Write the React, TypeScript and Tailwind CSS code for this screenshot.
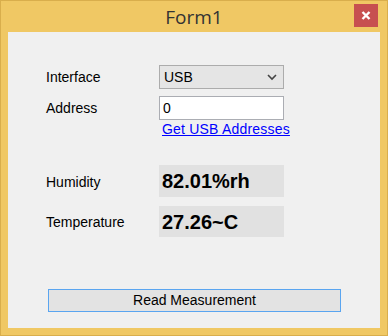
import React from 'react';

const font = { fontFamily: '"Liberation Sans", Arial, sans-serif' };
const bold = { fontFamily: '"Liberation Sans", Arial, sans-serif' };

export default function App() {
    return (
        <div className="w-[388px] h-[336px] bg-[#f0c864] border border-[#d9ae4c] flex flex-col" style={font}>
            <div className="h-[31px] relative flex items-center justify-center shrink-0">
                <span className="text-[19px] text-[#333333] pt-[1px]" style={{ fontFamily: '"Open Sans", "Liberation Sans", sans-serif' }}>Form1</span>
                <div className="absolute right-[9px] top-[3px] w-[24px] h-[23px] bg-[#c75050] flex items-center justify-center">
                    <svg width="10" height="9" viewBox="0 0 10 9">
                        <path d="M1.5 1 L8.5 8 M8.5 1 L1.5 8" stroke="#ffffff" strokeWidth="2.4" />
                    </svg>
                </div>
            </div>
            <div className="mx-[7px] h-[296px] bg-[#f0f0f0] flex flex-col pl-[38px] text-[14px] text-black">
                <div className="flex items-center mt-[33px] h-[24px]">
                    <span className="w-[113px]">Interface</span>
                    <div className="w-[125px] h-[24px] bg-[#e5e5e5] border border-[#acacac] flex items-center justify-between pl-[4px] pr-[6px]">
                        <span className="text-[14px]">USB</span>
                        <svg width="10" height="7" viewBox="0 0 10 7">
                            <path d="M1 1 L5 5 L9 1" stroke="#444444" strokeWidth="1.6" fill="none" />
                        </svg>
                    </div>
                </div>
                <div className="flex items-center mt-[7px] h-[24px]">
                    <span className="w-[113px]">Address</span>
                    <div className="w-[125px] h-[24px] bg-white border border-[#abadb3] flex items-center pl-[3px]">
                        <span className="text-[14px]">0</span>
                    </div>
                </div>
                <div className="ml-[116px] mt-[1px] text-[14px] text-[#0000ff] underline leading-[17px] tracking-[0.2px]">Get USB Addresses</div>
                <div className="flex items-center mt-[27px]">
                    <span className="w-[113px] mt-[2px]">Humidity</span>
                    <div className="w-[125px] h-[32px] bg-[#e1e1e1] flex items-center pl-[3px] text-[20px] font-bold" style={bold}>82.01%rh</div>
                </div>
                <div className="flex items-center mt-[9px]">
                    <span className="w-[113px] mt-[1px]">Temperature</span>
                    <div className="w-[125px] h-[31px] bg-[#e1e1e1] flex items-center pl-[3px] text-[20px] font-bold" style={bold}>27.26~C</div>
                </div>
                <div className="mt-[52px] ml-[2px] w-[293px] h-[23px] bg-[#e3e3e3] border border-[#5aa5f0] flex items-center justify-center text-[14px]">Read Measurement</div>
            </div>
        </div>
    );
}
